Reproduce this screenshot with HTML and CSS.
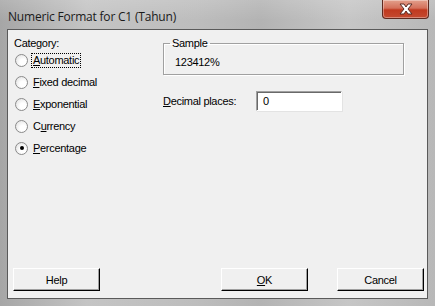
FILE: index.html
```html
<!DOCTYPE html>
<html lang="en">
<head>
    <meta charset="UTF-8">
    <title>Numeric Format for C1 (Tahun)</title>
    <link rel="stylesheet" href="styles.css">
</head>
<body>
    <div class="window">
        <div class="titlebar">
            <span class="title">Numeric Format for C1 (Tahun)</span>
            <div class="close-btn">
                <svg viewBox="0 0 16 12" width="16" height="12">
                    <path d="M2 1h4l2 3 2-3h4l-4 5 4 5h-4l-2-3-2 3H2l4-5z" fill="#fff" stroke="#5a2a22" stroke-width="1" stroke-linejoin="round" />
                </svg>
            </div>
        </div>
        <div class="client">
            <div class="main">
                <div class="category">
                    <div class="cat-label">Category:</div>
                    <div class="radio-row"><span class="radio"></span><span class="radio-text focused"><u>A</u>utomatic</span></div>
                    <div class="radio-row"><span class="radio"></span><span class="radio-text"><u>F</u>ixed decimal</span></div>
                    <div class="radio-row"><span class="radio"></span><span class="radio-text"><u>E</u>xponential</span></div>
                    <div class="radio-row"><span class="radio"></span><span class="radio-text">C<u>u</u>rrency</span></div>
                    <div class="radio-row"><span class="radio checked"></span><span class="radio-text"><u>P</u>ercentage</span></div>
                </div>
                <div class="options">
                    <fieldset class="sample">
                        <legend>Sample</legend>
                        <div class="sample-value">123412%</div>
                    </fieldset>
                    <div class="places-row">
                        <span class="places-label"><u>D</u>ecimal places:</span>
                        <span class="text-input">0</span>
                    </div>
                </div>
            </div>
            <div class="buttons">
                <button class="btn">Help</button>
                <div class="btn-group">
                    <button class="btn"><u>O</u>K</button>
                    <button class="btn">Cancel</button>
                </div>
            </div>
        </div>
    </div>
</body>
</html>
```

FILE: styles.css
```css
body {
    margin: 0;
    padding: 0;
    font-family: 'Liberation Sans', Arial, sans-serif;
    font-size: 11px;
    letter-spacing: -0.3px;
    color: #000;
    background: #a9a9a9;
}
.window {
    width: 435px;
    height: 306px;
    box-sizing: border-box;
    padding: 0 7px 7px 7px;
    display: flex;
    flex-direction: column;
    background: linear-gradient(90deg, #a6a6a6 0%, #c4c4c4 20%, #bdbdbd 45%, #b3b3b3 60%, #c6c6c6 80%, #b8b8b8 100%);
}
.titlebar {
    height: 29px;
    display: flex;
    justify-content: space-between;
    align-items: flex-start;
    background: linear-gradient(180deg, rgba(255,255,255,0.15), rgba(255,255,255,0) 70%);
    margin: 0 -7px;
    padding: 0 7px 0 8px;
}
.title {
    font-family: 'Open Sans', 'Liberation Sans', sans-serif;
    font-size: 12px;
    letter-spacing: -0.2px;
    margin-top: 8px;
    color: #1a1a1a;
}
.close-btn {
    width: 45px;
    height: 18px;
    margin-right: -1px;
    border: 1px solid #5e2a20;
    border-top: none;
    border-radius: 0 0 4px 4px;
    background: linear-gradient(180deg, #e3a08c 0%, #d4705a 45%, #c0391f 55%, #c44a30 100%);
    box-shadow: inset 0 0 0 1px rgba(255,255,255,0.35);
    display: flex;
    justify-content: center;
    align-items: center;
}
.client {
    flex: 1;
    display: flex;
    flex-direction: column;
    background: #f0f0f0;
    border: 1px solid #5a5a5a;
}
.main {
    flex: 1;
    display: flex;
}
.category {
    width: 155px;
    padding-top: 7px;
}
.cat-label {
    line-height: 13px;
    padding-left: 6px;
    margin-bottom: -1px;
}
.radio-row {
    height: 22px;
    display: flex;
    align-items: center;
    padding-left: 7px;
}
.radio {
    width: 11px;
    height: 11px;
    border: 1px solid #8a8a8a;
    border-radius: 50%;
    background: radial-gradient(circle at 65% 65%, #ffffff 30%, #dcdcdc 100%);
    display: flex;
    justify-content: center;
    align-items: center;
    margin-right: 3px;
}
.radio.checked::after {
    content: "";
    width: 4px;
    height: 4px;
    border-radius: 50%;
    background: #000;
}
.radio-text {
    line-height: 13px;
    padding: 0 1px;
    border: 1px solid transparent;
}
.radio-text.focused {
    border: 1px dotted #000;
}
.options {
    padding-top: 7px;
}
.sample {
    width: 241px;
    box-sizing: border-box;
    margin: 0;
    padding: 6px 0 5px 11px;
    border: 1px solid #a0a0a0;
    box-shadow: 1px 1px 0 #fff, inset 1px 1px 0 #fff;
}
.sample legend {
    line-height: 13px;
    padding: 0 2px;
    margin-left: -5px;
}
.sample-value {
    line-height: 13px;
}
.places-row {
    display: flex;
    align-items: center;
    margin-top: 16px;
}
.places-label {
    width: 93px;
}
.text-input {
    width: 86px;
    height: 20px;
    box-sizing: border-box;
    background: #fff;
    border: 1px solid;
    border-color: #a0a0a0 #fff #fff #a0a0a0;
    box-shadow: inset 1px 1px 0 #696969, 1px 1px 0 #e3e3e3;
    padding: 3px 0 0 6px;
    line-height: 13px;
}
.buttons {
    display: flex;
    justify-content: space-between;
    padding: 0 3px 7px 5px;
}
.btn-group {
    display: flex;
    gap: 29px;
}
.btn {
    width: 87px;
    height: 23px;
    font-family: 'Liberation Sans', Arial, sans-serif;
    font-size: 11px;
    letter-spacing: -0.3px;
    color: #000;
    background: #f0f0f0;
    border: 1px solid;
    border-color: #fff #000 #000 #fff;
    box-shadow: inset -1px -1px 0 #a0a0a0;
    border-radius: 0;
    padding: 0;
}
```
